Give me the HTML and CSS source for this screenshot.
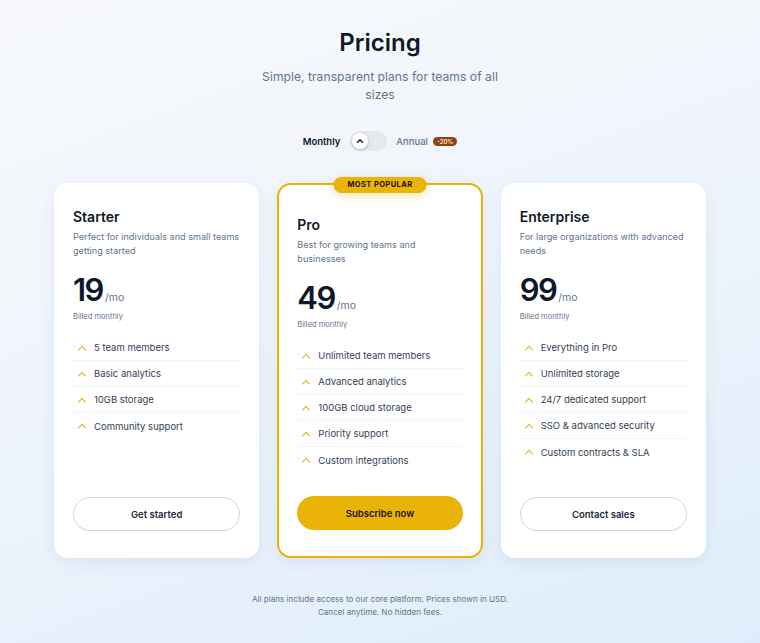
FILE: index.html
```html
<!DOCTYPE html>
<html lang="en">
<head>
  <meta charset="UTF-8" />
  <meta name="viewport" content="width=device-width, initial-scale=1.0"/>
  <title>Pricing</title>
  <link rel="stylesheet" href="styles.css">
</head>
<body>
  <div class="page">
    <div class="header">
      <h1>Pricing</h1>
      <p>Simple, transparent plans for teams of all sizes</p>
    </div>

    <div class="billing">
      <span class="label active">Monthly</span>
      <button class="switch" type="button" aria-label="Toggle billing">
        <span class="knob">
          <svg viewBox="0 0 10 10" width="8" height="8"><path d="M2 6.5 L5 3.5 L8 6.5" fill="none" stroke="#111827" stroke-width="1.8" stroke-linecap="round" stroke-linejoin="round"/></svg>
        </span>
      </button>
      <span class="label">Annual</span>
      <span class="save">-20%</span>
    </div>

    <div class="plans">
      <div class="card">
        <h2>Starter</h2>
        <p class="desc">Perfect for individuals and small teams getting started</p>
        <div class="price"><span class="amount">19</span><span class="per">/mo</span></div>
        <div class="billed">Billed monthly</div>
        <ul class="features">
          <li>5 team members</li>
          <li>Basic analytics</li>
          <li>10GB storage</li>
          <li>Community support</li>
        </ul>
        <button class="btn" type="button">Get started</button>
      </div>

      <div class="card featured">
        <span class="tag">Most popular</span>
        <h2>Pro</h2>
        <p class="desc">Best for growing teams and businesses</p>
        <div class="price"><span class="amount">49</span><span class="per">/mo</span></div>
        <div class="billed">Billed monthly</div>
        <ul class="features">
          <li>Unlimited team members</li>
          <li>Advanced analytics</li>
          <li>100GB cloud storage</li>
          <li>Priority support</li>
          <li>Custom integrations</li>
        </ul>
        <button class="btn primary" type="button">Subscribe now</button>
      </div>

      <div class="card">
        <h2>Enterprise</h2>
        <p class="desc">For large organizations with advanced needs</p>
        <div class="price"><span class="amount">99</span><span class="per">/mo</span></div>
        <div class="billed">Billed monthly</div>
        <ul class="features">
          <li>Everything in Pro</li>
          <li>Unlimited storage</li>
          <li>24/7 dedicated support</li>
          <li>SSO &amp; advanced security</li>
          <li>Custom contracts &amp; SLA</li>
        </ul>
        <button class="btn" type="button">Contact sales</button>
      </div>
    </div>

    <p class="note">All plans include access to our core platform. Prices shown in USD. Cancel anytime. No hidden fees.</p>
  </div>
</body>
</html>
```

FILE: styles.css
```css
* { box-sizing: border-box; }

body {
  margin: 0;
  min-height: 100vh;
  font-family: 'Inter', 'Noto Sans', sans-serif;
  background: linear-gradient(160deg, #f7f9fc 0%, #eef4fb 50%, #deedfb 100%);
  color: #0f172a;
}
.page {
  max-width: 652px;
  margin: 0 auto;
  padding: 27px 0 0;
}
.header {
  text-align: center;
}
.header h1 {
  margin: 0;
  font-size: 24px;
  line-height: 32px;
  font-weight: 600;
  color: #111827;
}
.header p {
  margin: 9px auto 0;
  max-width: 245px;
  font-size: 12.2px;
  line-height: 18px;
  color: #64748b;
}

/* billing switch */
.billing {
  display: flex;
  align-items: center;
  justify-content: center;
  margin-top: 27px;
  height: 20px;
}
.label {
  font-size: 9.5px;
  color: #64748b;
  font-weight: 500;
}
.label.active {
  color: #111827;
  font-weight: 600;
}
.switch {
  width: 37px;
  height: 20px;
  margin: 0 9px 0 10px;
  padding: 2px;
  border: none;
  border-radius: 10px;
  background: #e5e8ee;
  display: flex;
  align-items: center;
  cursor: pointer;
}
.knob {
  width: 16px;
  height: 16px;
  border-radius: 50%;
  background: #fff;
  box-shadow: 0 1px 3px rgba(15,23,42,0.25);
  display: flex;
  align-items: center;
  justify-content: center;
}
.save {
  margin-left: 5px;
  padding: 1px 4px;
  border-radius: 6px;
  background: #92400e;
  color: #fde9c8;
  font-size: 6px;
  font-weight: 600;
  line-height: 7px;
}

/* plan cards */
.plans {
  display: grid;
  grid-template-columns: repeat(3, 1fr);
  gap: 18px;
  margin-top: 32px;
}
.card {
  position: relative;
  display: flex;
  flex-direction: column;
  height: 375px;
  padding: 25px 19px 27px;
  background: #fff;
  border-radius: 14px;
  box-shadow: 0 4px 16px rgba(30,64,120,0.08);
}
.card.featured {
  border: 2px solid #eab308;
  padding: 31px 18px 26px;
}
.tag {
  position: absolute;
  top: -8px;
  left: 50%;
  transform: translateX(-50%);
  padding: 0 14px;
  height: 16px;
  line-height: 16px;
  border-radius: 8px;
  background: #eab308;
  color: #1f1300;
  font-size: 7.5px;
  font-weight: 700;
  letter-spacing: 0.4px;
  text-transform: uppercase;
  white-space: nowrap;
  box-shadow: 0 3px 8px rgba(234,179,8,0.35);
}
.card h2 {
  margin: 0;
  font-size: 14px;
  line-height: 18px;
  font-weight: 600;
  color: #111827;
}
.desc {
  margin: 4px 0 0;
  font-size: 9.1px;
  line-height: 14px;
  color: #64748b;
  min-height: 28px;
}
.price {
  margin-top: 15px;
  display: flex;
  align-items: baseline;
}
.amount {
  font-size: 31px;
  line-height: 34px;
  font-weight: 600;
  letter-spacing: -1.5px;
  color: #0f172a;
}
.per {
  margin-left: 2px;
  font-size: 10.5px;
  color: #64748b;
}
.billed {
  margin-top: 5px;
  font-size: 7.5px;
  color: #64748b;
}
.features {
  list-style: none;
  margin: 14px 0 0;
  padding: 0;
}
.features li {
  display: flex;
  align-items: center;
  gap: 7px;
  height: 26px;
  padding-left: 3px;
  font-size: 9.5px;
  color: #334155;
  border-bottom: 1px solid #f1f5f9;
}
.features li:last-child { border-bottom: none; }
.features li::before {
  content: "";
  width: 5px;
  height: 5px;
  margin: 4px 2px 0 3px;
  border-left: 1.8px solid #eab308;
  border-top: 1.8px solid #eab308;
  transform: rotate(45deg);
  flex-shrink: 0;
}
.btn {
  margin-top: auto;
  height: 34px;
  border-radius: 17px;
  border: 1px solid #cbd5e1;
  background: #fff;
  font-family: inherit;
  font-size: 9.5px;
  font-weight: 600;
  color: #1e293b;
  cursor: pointer;
}
.btn.primary {
  border: none;
  background: #eab308;
  color: #1c1400;
}

.note {
  margin: 35px auto 0;
  max-width: 270px;
  text-align: center;
  font-size: 8.1px;
  line-height: 13px;
  color: #64748b;
}
```
